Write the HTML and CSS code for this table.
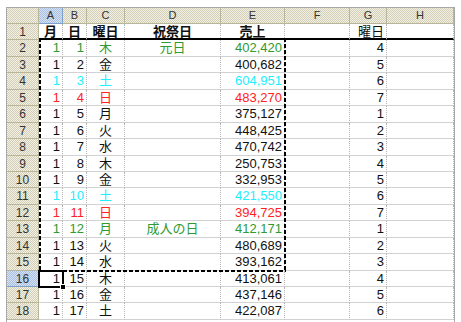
FILE: index.html
```html
<!DOCTYPE html>
<html lang="ja">
<head>
<meta charset="utf-8">
<title>Sheet</title>
<link rel="stylesheet" href="styles.css">
</head>
<body>
<div class="sheet">
  <div class="grid">
    <div class="row"><div class="ch corner"></div><div class="ch sel">A</div><div class="ch">B</div><div class="ch">C</div><div class="ch">D</div><div class="ch">E</div><div class="ch">F</div><div class="ch">G</div><div class="ch">H</div></div>
    <div class="row top"><div class="rh">1</div><div class="c m b">月</div><div class="c m b">日</div><div class="c m b">曜日</div><div class="c m b">祝祭日</div><div class="c m b">売上</div><div class="c"></div><div class="c r">曜日</div><div class="c"></div></div>
    <div class="row g"><div class="rh">2</div><div class="c r">1</div><div class="c r">1</div><div class="c m">木</div><div class="c m">元日</div><div class="c r">402,420</div><div class="c"></div><div class="c r k">4</div><div class="c"></div></div>
    <div class="row"><div class="rh">3</div><div class="c r">1</div><div class="c r">2</div><div class="c m">金</div><div class="c m"></div><div class="c r">400,682</div><div class="c"></div><div class="c r k">5</div><div class="c"></div></div>
    <div class="row y"><div class="rh">4</div><div class="c r">1</div><div class="c r">3</div><div class="c m">土</div><div class="c m"></div><div class="c r">604,951</div><div class="c"></div><div class="c r k">6</div><div class="c"></div></div>
    <div class="row d"><div class="rh">5</div><div class="c r">1</div><div class="c r">4</div><div class="c m">日</div><div class="c m"></div><div class="c r">483,270</div><div class="c"></div><div class="c r k">7</div><div class="c"></div></div>
    <div class="row"><div class="rh">6</div><div class="c r">1</div><div class="c r">5</div><div class="c m">月</div><div class="c m"></div><div class="c r">375,127</div><div class="c"></div><div class="c r k">1</div><div class="c"></div></div>
    <div class="row"><div class="rh">7</div><div class="c r">1</div><div class="c r">6</div><div class="c m">火</div><div class="c m"></div><div class="c r">448,425</div><div class="c"></div><div class="c r k">2</div><div class="c"></div></div>
    <div class="row"><div class="rh">8</div><div class="c r">1</div><div class="c r">7</div><div class="c m">水</div><div class="c m"></div><div class="c r">470,742</div><div class="c"></div><div class="c r k">3</div><div class="c"></div></div>
    <div class="row"><div class="rh">9</div><div class="c r">1</div><div class="c r">8</div><div class="c m">木</div><div class="c m"></div><div class="c r">250,753</div><div class="c"></div><div class="c r k">4</div><div class="c"></div></div>
    <div class="row"><div class="rh">10</div><div class="c r">1</div><div class="c r">9</div><div class="c m">金</div><div class="c m"></div><div class="c r">332,953</div><div class="c"></div><div class="c r k">5</div><div class="c"></div></div>
    <div class="row y"><div class="rh">11</div><div class="c r">1</div><div class="c r">10</div><div class="c m">土</div><div class="c m"></div><div class="c r">421,550</div><div class="c"></div><div class="c r k">6</div><div class="c"></div></div>
    <div class="row d"><div class="rh">12</div><div class="c r">1</div><div class="c r">11</div><div class="c m">日</div><div class="c m"></div><div class="c r">394,725</div><div class="c"></div><div class="c r k">7</div><div class="c"></div></div>
    <div class="row g"><div class="rh">13</div><div class="c r">1</div><div class="c r">12</div><div class="c m">月</div><div class="c m">成人の日</div><div class="c r">412,171</div><div class="c"></div><div class="c r k">1</div><div class="c"></div></div>
    <div class="row"><div class="rh">14</div><div class="c r">1</div><div class="c r">13</div><div class="c m">火</div><div class="c m"></div><div class="c r">480,689</div><div class="c"></div><div class="c r k">2</div><div class="c"></div></div>
    <div class="row"><div class="rh">15</div><div class="c r">1</div><div class="c r">14</div><div class="c m">水</div><div class="c m"></div><div class="c r">393,162</div><div class="c"></div><div class="c r k">3</div><div class="c"></div></div>
    <div class="row"><div class="rh sel">16</div><div class="c r">1</div><div class="c r">15</div><div class="c m">木</div><div class="c m"></div><div class="c r">413,061</div><div class="c"></div><div class="c r k">4</div><div class="c"></div></div>
    <div class="row"><div class="rh">17</div><div class="c r">1</div><div class="c r">16</div><div class="c m">金</div><div class="c m"></div><div class="c r">437,146</div><div class="c"></div><div class="c r k">5</div><div class="c"></div></div>
    <div class="row"><div class="rh">18</div><div class="c r">1</div><div class="c r">17</div><div class="c m">土</div><div class="c m"></div><div class="c r">422,087</div><div class="c"></div><div class="c r k">6</div><div class="c"></div></div>
    <div class="marquee"></div>
    <div class="active"></div>
  </div>
</div>
</body>
</html>
```
FILE: styles.css
```css
html, body {
  margin: 0;
  background: #fff;
}
.sheet {
  margin: 7px 0 0 6px;
  width: 449px;
  height: 315px;
  box-sizing: border-box;
  border: 1px solid #a8a8a8;
  border-bottom: 0;
  overflow: hidden;
}
.grid {
  position: relative;
  display: grid;
  grid-template-columns: 32px 24px 24px 38px 96px 64px 65px 37px 67px;
  grid-template-rows: 16px repeat(18, 16.45px);
  font: 13px "Liberation Sans", "Noto Sans CJK JP", sans-serif;
  color: #111;
}
.row { display: contents; }
.row.g { color: #2f9a2f; }
.row.y { color: #22eeff; }
.row.d { color: #ff2222; }
.k { color: #111; }
.ch, .rh, .c {
  box-sizing: border-box;
  white-space: nowrap;
  overflow: hidden;
}
.ch, .rh {
  background: repeating-conic-gradient(#d3cfb6 0 25%, #f3f1e6 0 50%) 0 0 / 2px 2px;
  border-right: 1px solid #b9b59a;
  border-bottom: 1px solid #b9b59a;
  color: #333;
  text-align: center;
}
.ch {
  font-size: 11px;
  line-height: 15px;
}
.rh {
  font-size: 12px;
  line-height: 16px;
}
.ch.sel, .rh.sel {
  background: repeating-conic-gradient(#a8c0e2 0 25%, #d6e2f3 0 50%) 0 0 / 2px 2px;
  border-color: #7f9fcc;
}
.c {
  border-right: 1px dotted #b4b4b4;
  border-bottom: 1px solid #d2d2d2;
  padding: 0 2px;
  line-height: 16px;
}
.top .c {
  border-bottom: 2px solid #000;
  line-height: 15px;
}
.r { text-align: right; }
.m { text-align: center; }
.b { font-weight: bold; }
.marquee {
  position: absolute;
  grid-column: 2 / 7;
  grid-row: 3 / 17;
  top: -2px;
  left: 0;
  right: -1px;
  bottom: -1px;
  background:
    repeating-linear-gradient(90deg, #000 0 4px, transparent 4px 6px) left top / 100% 2px no-repeat,
    repeating-linear-gradient(90deg, #000 0 4px, transparent 4px 6px) left bottom / 100% 2px no-repeat,
    repeating-linear-gradient(180deg, #000 0 4px, transparent 4px 6px) left top / 2px 100% no-repeat,
    repeating-linear-gradient(180deg, #000 0 4px, transparent 4px 6px) right top / 2px 100% no-repeat;
  pointer-events: none;
}
.active {
  position: absolute;
  grid-column: 2 / 3;
  grid-row: 17 / 18;
  top: -1px;
  left: -1px;
  right: -1px;
  bottom: -1px;
  border: 2px solid #000;
}
.active::after {
  content: "";
  position: absolute;
  right: -4px;
  bottom: -4px;
  width: 4px;
  height: 4px;
  background: #000;
  border: 1px solid #fff;
}
```
